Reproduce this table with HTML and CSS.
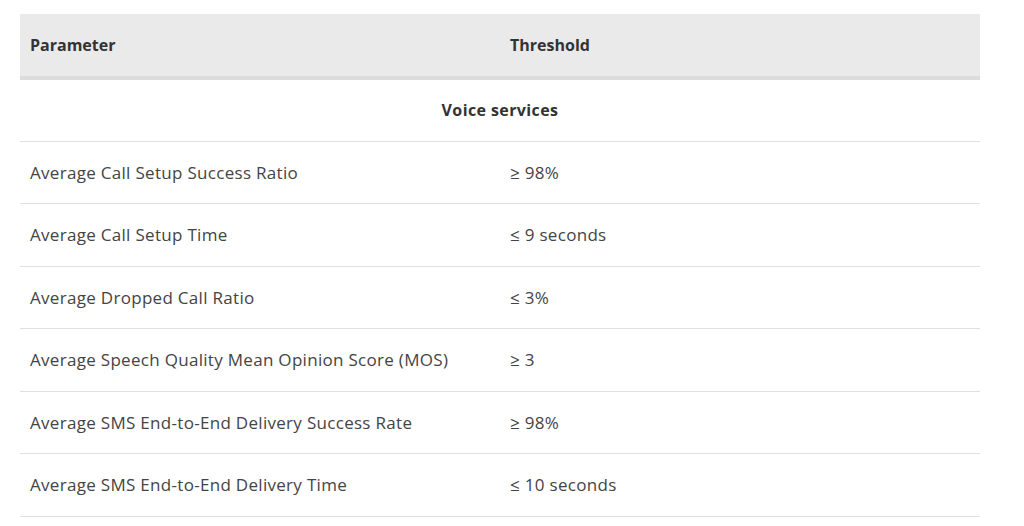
FILE: index.html
```html
<!DOCTYPE html>
<html lang="en">
<head>
<meta charset="utf-8">
<title>Thresholds</title>
<link rel="stylesheet" href="styles.css">
</head>
<body>
<table class="kpi">
  <thead>
    <tr>
      <th class="col-param">Parameter</th>
      <th class="col-thr">Threshold</th>
    </tr>
  </thead>
  <tbody>
    <tr class="group"><td colspan="2">Voice services</td></tr>
    <tr><td>Average Call Setup Success Ratio</td><td>≥ 98%</td></tr>
    <tr><td>Average Call Setup Time</td><td>≤ 9 seconds</td></tr>
    <tr><td>Average Dropped Call Ratio</td><td>≤ 3%</td></tr>
    <tr><td>Average Speech Quality Mean Opinion Score (MOS)</td><td>≥ 3</td></tr>
    <tr><td>Average SMS End-to-End Delivery Success Rate</td><td>≥ 98%</td></tr>
    <tr><td>Average SMS End-to-End Delivery Time</td><td>≤ 10 seconds</td></tr>
  </tbody>
</table>
</body>
</html>
```
FILE: styles.css
```css
html, body {
  margin: 0;
  padding: 0;
  background: #ffffff;
}
body {
  padding: 14px 44px 0 20px;
  font-family: "Open Sans", "Liberation Sans", sans-serif;
  color: #444444;
  font-size: 16px;
}
.kpi {
  width: 960px;
  border-collapse: collapse;
}
.kpi th {
  text-align: left;
  font-weight: 700;
  background: #eaeaea;
  height: 64px;
  padding: 0 10px;
  border-bottom: 4px solid #dcdcdc;
  box-sizing: border-box;
  color: #333;
}
.col-param { width: 480px; }
.kpi td {
  padding: 0 10px;
  height: 62.5px;
  border-bottom: 1px solid #e0e0e0;
  box-sizing: border-box;
  font-size: 17px;
  letter-spacing: 0.3px;
}
.kpi .group td {
  text-align: center;
  font-weight: 700;
  font-size: 16px;
  letter-spacing: 0.4px;
  height: 63px;
  color: #333;
}
```
